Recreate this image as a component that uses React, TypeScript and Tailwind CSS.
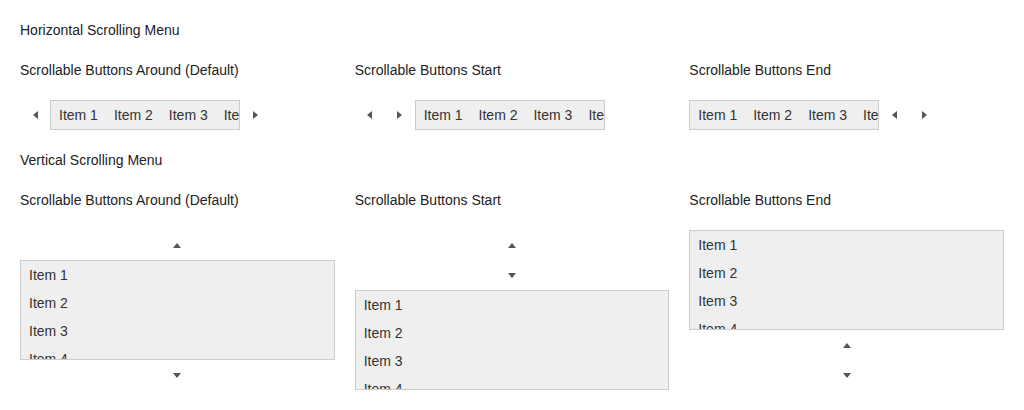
const items = ['Item 1', 'Item 2', 'Item 3', 'Item 4', 'Item 5', 'Item 6']

type Dir = 'left' | 'right' | 'up' | 'down'

function Arrow({ dir }: { dir: Dir }) {
  const horizontal = dir === 'left' || dir === 'right'
  const points = {
    left: '5,0 5,8 0,4',
    right: '0,0 0,8 5,4',
    up: '0,5 8,5 4,0',
    down: '0,0 8,0 4,5',
  }[dir]
  return (
    <button
      type="button"
      className={`flex items-center justify-center shrink-0 ${horizontal ? 'w-[30px] h-[30px]' : 'w-full h-[30px]'}`}
    >
      <svg width={horizontal ? 5 : 8} height={horizontal ? 8 : 5} viewBox={horizontal ? '0 0 5 8' : '0 0 8 5'}>
        <polygon points={points} fill="#555555" />
      </svg>
    </button>
  )
}

function HorizontalMenu({ placement }: { placement: 'around' | 'start' | 'end' }) {
  const box = (
    <div className="w-[190px] h-[30px] border border-[#cccccc] bg-[#efefef] overflow-hidden flex whitespace-nowrap shrink-0">
      {items.map(item => (
        <div key={item} className="px-2 leading-[28px] text-[#333333]">
          {item}
        </div>
      ))}
    </div>
  )
  return (
    <div className="flex items-center">
      {placement === 'around' && <Arrow dir="left" />}
      {placement === 'start' && (
        <>
          <Arrow dir="left" />
          <Arrow dir="right" />
        </>
      )}
      {box}
      {placement === 'around' && <Arrow dir="right" />}
      {placement === 'end' && (
        <>
          <Arrow dir="left" />
          <Arrow dir="right" />
        </>
      )}
    </div>
  )
}

function VerticalMenu({ placement }: { placement: 'around' | 'start' | 'end' }) {
  const box = (
    <div className="h-[100px] border border-[#cccccc] bg-[#efefef] overflow-hidden">
      {items.map(item => (
        <div key={item} className="px-2 py-1 leading-5 text-[#333333]">
          {item}
        </div>
      ))}
    </div>
  )
  return (
    <div className="flex flex-col">
      {placement === 'around' && <Arrow dir="up" />}
      {placement === 'start' && (
        <>
          <Arrow dir="up" />
          <Arrow dir="down" />
        </>
      )}
      {box}
      {placement === 'around' && <Arrow dir="down" />}
      {placement === 'end' && (
        <>
          <Arrow dir="up" />
          <Arrow dir="down" />
        </>
      )}
    </div>
  )
}

const labels: { title: string; placement: 'around' | 'start' | 'end' }[] = [
  { title: 'Scrollable Buttons Around (Default)', placement: 'around' },
  { title: 'Scrollable Buttons Start', placement: 'start' },
  { title: 'Scrollable Buttons End', placement: 'end' },
]

export default function App() {
  return (
    <div className="bg-white px-5 pt-5 pb-5 text-[14px] leading-5 text-[#222222] font-['Liberation_Sans',Arial,sans-serif]">
      <h2 className="h-5">Horizontal Scrolling Menu</h2>
      <div className="grid grid-cols-3 gap-x-5 mt-5">
        {labels.map(l => (
          <div key={l.title}>
            <div className="h-5">{l.title}</div>
            <div className="mt-5">
              <HorizontalMenu placement={l.placement} />
            </div>
          </div>
        ))}
      </div>

      <h2 className="h-5 mt-5">Vertical Scrolling Menu</h2>
      <div className="grid grid-cols-3 gap-x-5 mt-5 items-start">
        {labels.map(l => (
          <div key={l.title}>
            <div className="h-5">{l.title}</div>
            <div className="mt-5">
              <VerticalMenu placement={l.placement} />
            </div>
          </div>
        ))}
      </div>
    </div>
  )
}
